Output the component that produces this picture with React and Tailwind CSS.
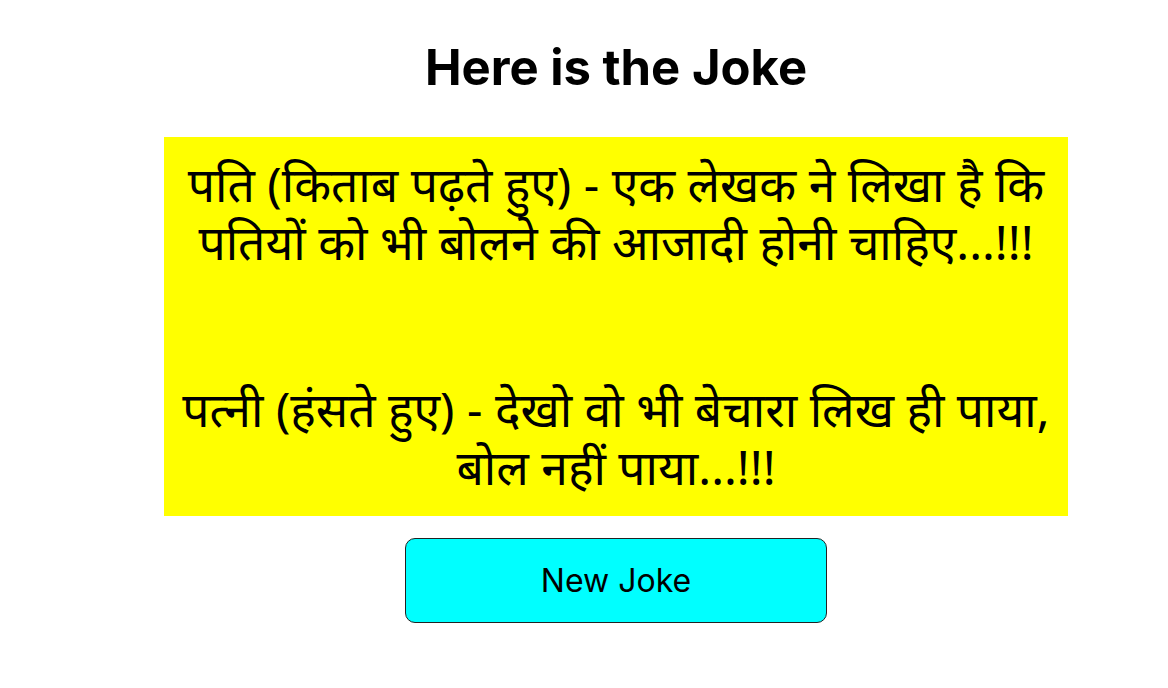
export default function App() {
  return (
    <div className="min-h-[688px] bg-white pl-16 font-['Inter',sans-serif] text-black">
      <div className="flex flex-col items-center">
        <h1 className="mt-[40px] text-[49px] font-bold leading-[56px]">Here is the Joke</h1>
        <div className="mt-[41px] w-[904px] bg-[#ffff00] px-3 pt-[18px] pb-[20px] text-center font-['Noto_Sans','DejaVu_Sans',sans-serif] text-[48px] leading-[58px]">
          <p>पति (किताब पढ़ते हुए) - एक लेखक ने लिखा है कि पतियों को भी बोलने की आजादी होनी चाहिए...!!!</p>
          <div className="h-[109px]" />
          <p>पत्नी (हंसते हुए) - देखो वो भी बेचारा लिख ही पाया, बोल नहीं पाया...!!!</p>
        </div>
        <button className="mt-[22px] h-[85px] w-[422px] rounded-[10px] border border-[#222222] bg-[#00ffff] text-[32px]">
          New Joke
        </button>
      </div>
    </div>
  );
}
